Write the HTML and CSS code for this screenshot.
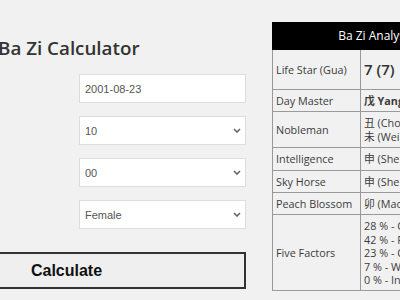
FILE: index.html
```html
<!DOCTYPE html>
<html>
<head>
    <title>Ba Zi Calculator</title>
    <link rel="stylesheet" href="styles.css">
</head>
<body>
    <div class="page">
        <div class="calc">
            <h1>Ba Zi Calculator</h1>
            <div class="fields">
                <input type="text" class="field" value="2001-08-23">
                <div class="pick">
                    <select class="field"><option>10</option></select>
                    <svg class="chev" width="8" height="5" viewBox="0 0 8 5"><path d="M1 1 L4 4 L7 1" fill="none" stroke="#666" stroke-width="1.6"/></svg>
                </div>
                <div class="pick">
                    <select class="field"><option>00</option></select>
                    <svg class="chev" width="8" height="5" viewBox="0 0 8 5"><path d="M1 1 L4 4 L7 1" fill="none" stroke="#666" stroke-width="1.6"/></svg>
                </div>
                <div class="pick">
                    <select class="field"><option>Female</option></select>
                    <svg class="chev" width="8" height="5" viewBox="0 0 8 5"><path d="M1 1 L4 4 L7 1" fill="none" stroke="#666" stroke-width="1.6"/></svg>
                </div>
            </div>
            <button class="calc-btn">Calculate</button>
        </div>

        <table class="result">
            <tr><th colspan="2">Ba Zi Analysis</th></tr>
            <tr class="big"><td class="lbl">Life Star (Gua)</td><td class="gua">7 (7)</td></tr>
            <tr><td class="lbl">Day Master</td><td><b>戊 Yang Earth</b></td></tr>
            <tr><td class="lbl">Nobleman</td><td>丑 (Chou) Ox<br>未 (Wei) Goat</td></tr>
            <tr><td class="lbl">Intelligence</td><td>申 (Shen) Monkey</td></tr>
            <tr><td class="lbl">Sky Horse</td><td>申 (Shen) Monkey</td></tr>
            <tr><td class="lbl">Peach Blossom</td><td>卯 (Mao) Rabbit</td></tr>
            <tr><td class="lbl">Five Factors</td><td>28 % - Companion<br>42 % - Resource<br>23 % - Output<br>7 % - Wealth<br>0 % - Influence</td></tr>
        </table>
    </div>
</body>
</html>
```

FILE: styles.css
```css
body {
    margin: 0;
    background: #f1f1f1;
    overflow: hidden;
    font-family: 'Open Sans', sans-serif;
    color: #333;
}
.page {
    display: flex;
    align-items: flex-start;
    gap: 26px;
    margin-left: -113px;
    width: 700px;
}
.calc {
    width: 359px;
    flex-shrink: 0;
}
h1 {
    font-size: 18.8px;
    font-weight: 600;
    color: #333;
    margin: 35px 0 12px;
    padding-left: 111px;
    line-height: 27px;
}
.fields {
    display: flex;
    flex-direction: column;
    gap: 13px;
    margin-left: 192px;
    width: 167px;
}
.pick {
    position: relative;
}
.field {
    box-sizing: border-box;
    width: 167px;
    height: 29px;
    border: 1px solid #ddd;
    background: #fff;
    padding: 0 5px;
    font-family: 'Liberation Sans', Arial, sans-serif;
    font-size: 11px;
    color: #555;
    border-radius: 0;
    appearance: none;
    -webkit-appearance: none;
    display: block;
}
.chev {
    position: absolute;
    right: 5px;
    top: 12px;
}
.calc-btn {
    display: block;
    box-sizing: border-box;
    width: 359px;
    height: 37px;
    margin-top: 23px;
    background: #efefef;
    border: 2px solid #333;
    font-family: 'Liberation Sans', Arial, sans-serif;
    font-size: 16px;
    font-weight: bold;
    color: #111;
}
.result {
    flex-shrink: 0;
    width: 208px;
    margin-top: 22px;
    border-collapse: collapse;
    font-size: 10.8px;
    line-height: 13.4px;
    color: #3c3c3c;
}
.result th {
    background: #000;
    color: #fff;
    font-size: 12px;
    font-weight: normal;
    height: 26px;
    padding: 0;
    border: 1px solid #000;
}
.result td {
    border: 1px solid #999;
    padding: 4px 3px;
    vertical-align: middle;
    white-space: nowrap;
    font-family: 'Open Sans', 'Noto Sans CJK SC', sans-serif;
}
.result td.lbl {
    width: 81px;
}
.result .big td {
    padding-top: 9px;
    padding-bottom: 9px;
}
.result .gua {
    font-size: 15px;
    font-weight: 600;
    line-height: 21px;
    color: #333;
}
```
